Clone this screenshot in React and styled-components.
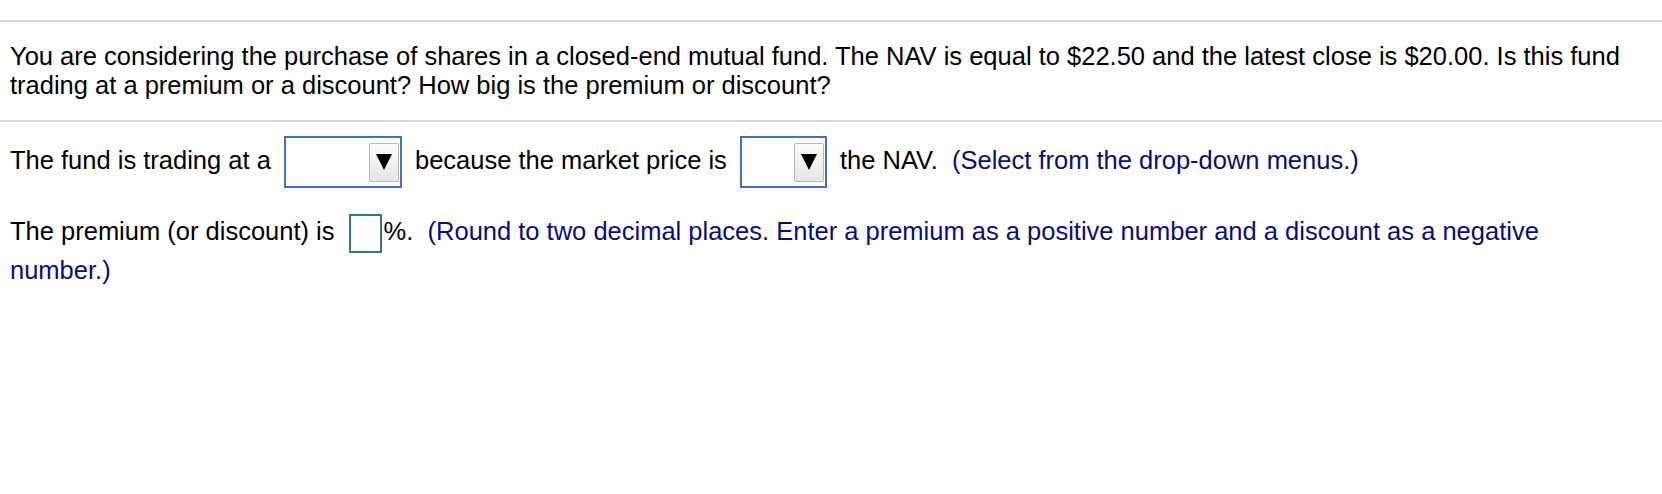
import styled, { createGlobalStyle } from "styled-components";

const GlobalStyle = createGlobalStyle`
  body {
    margin: 0;
    background: #ffffff;
    font-family: "Liberation Sans", Arial, Helvetica, sans-serif;
    color: #000000;
  }
`;

const Page = styled.div`
  padding-top: 20px;
  width: 1662px;
`;

const Rule = styled.div`
  height: 2px;
  background: #d3d6da;
`;

const Question = styled.p`
  margin: 0;
  padding: 20px 10px 20px 10px;
  font-size: 25.5px;
  line-height: 29px;
`;

const Answers = styled.div`
  padding: 14px 24px 0 10px;
  font-size: 25.5px;
`;

const Line = styled.p`
  margin: ${(p) => p.$top || 0}px 0 0 0;
  line-height: ${(p) => p.$lh || 32}px;
`;

const Hint = styled.span`
  color: #0b0b80;
`;

const SelectBox = styled.span`
  display: inline-flex;
  justify-content: flex-end;
  align-items: center;
  box-sizing: border-box;
  width: ${(p) => p.$w}px;
  height: 52px;
  margin: 0 6px;
  padding-right: 1px;
  border: 2px solid #4470c0;
  background: #ffffff;
  vertical-align: middle;
`;

const Arrow = styled.span`
  display: flex;
  align-items: center;
  justify-content: center;
  box-sizing: border-box;
  width: 30px;
  height: 39px;
  border: 1px solid #b8b8b8;
  border-radius: 2px;
  background: linear-gradient(#fbfbfb, #e6e6e6);
`;

const NumberBox = styled.span`
  display: inline-block;
  box-sizing: border-box;
  width: 33px;
  height: 39px;
  margin: 0 2px 0 7px;
  border: 2px solid #2b7a92;
  vertical-align: middle;
`;

function Dropdown({ width }) {
  return (
    <SelectBox $w={width}>
      <Arrow>
        <svg width="16" height="18" viewBox="0 0 16 18">
          <polygon points="0,1 16,1 8,17" fill="#000" />
        </svg>
      </Arrow>
    </SelectBox>
  );
}

export default function App() {
  return (
    <Page>
      <GlobalStyle />
      <Rule />
      <Question>
        You are considering the purchase of shares in a closed-end mutual fund.
        The NAV is equal to $22.50 and the latest close is $20.00. Is this fund
        trading at a premium or a discount? How big is the premium or discount?
      </Question>
      <Rule />
      <Answers>
        <Line>
          The fund is trading at a <Dropdown width={118} /> because the market
          price is <Dropdown width={87} /> the NAV.{"\u00a0\u00a0"}
          <Hint>(Select from the drop-down menus.)</Hint>
        </Line>
        <Line $top={26} $lh={35}>
          The premium (or discount) is <NumberBox />
          %.{"\u00a0\u00a0"}
          <Hint>
            (Round to two decimal places. Enter a premium as a positive number
            and a discount as a negative number.)
          </Hint>
        </Line>
      </Answers>
    </Page>
  );
}
